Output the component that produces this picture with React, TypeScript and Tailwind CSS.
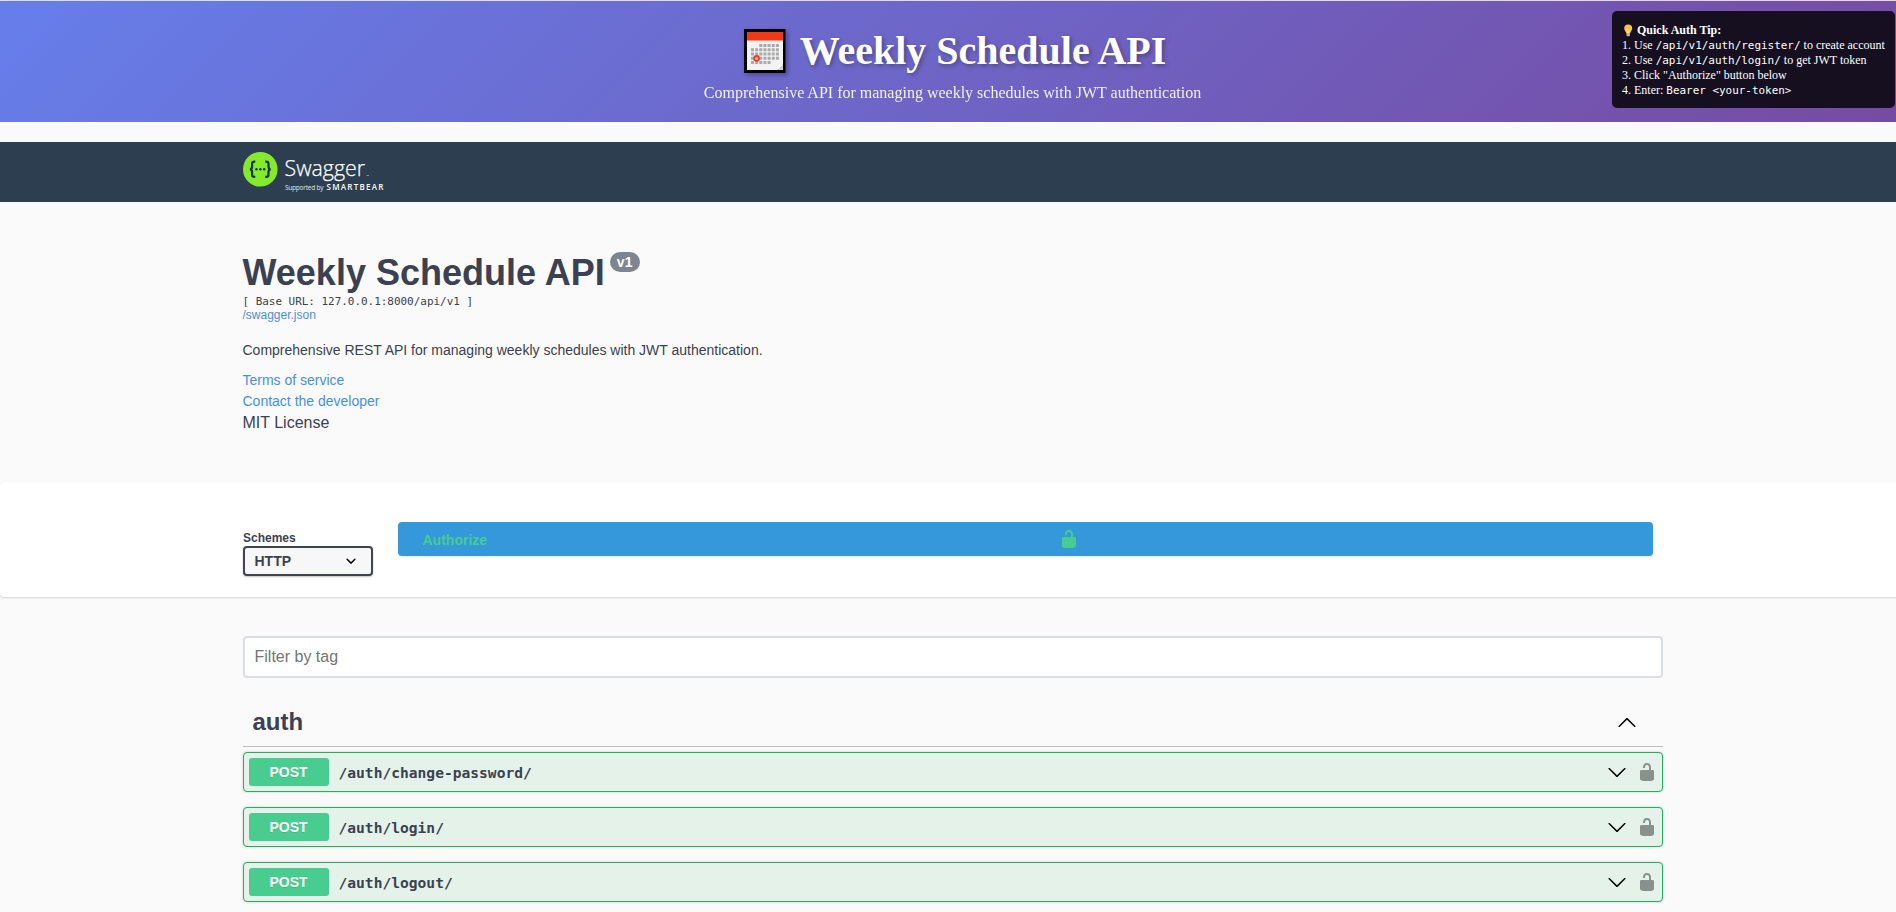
import React from "react";

const MONO = "font-['DejaVu_Sans_Mono',monospace]";

function CalendarIcon() {
  const dots: React.ReactNode[] = [];
  for (let r = 0; r < 5; r++) {
    for (let c = 0; c < 7; c++) {
      if (r === 0 && c < 2) continue;
      if (r === 4 && c > 4) continue;
      dots.push(<rect key={`${r}-${c}`} x={7 + c * 4.15} y={15 + r * 4.25} width="3" height="3" fill="#aaaaaa" />);
    }
  }
  return (
    <svg width="42" height="44" viewBox="0 0 42 44" className="shrink-0 drop-shadow-[2px_2px_2px_rgba(0,0,0,0.3)]">
      <rect width="41.5" height="44" fill="#000" />
      <rect x="3" y="3" width="36" height="38" fill="#f2f2f2" />
      <rect x="3" y="3" width="36" height="8.5" fill="#f03a17" />
      {dots}
      <circle cx="12.6" cy="29.4" r="2.5" fill="none" stroke="#f03a17" strokeWidth="1.6" />
      <path d="M39 35v6h-6z" fill="#cfcfcf" />
      <path d="M34 40V36.500l4.500-.5z" fill="#fff" />
    </svg>
  );
}

function BulbIcon() {
  return (
    <svg width="9" height="14" viewBox="0 0 9 14" className="mr-[4px] ml-[2px] shrink-0">
      <path d="M4.200 0.500a4 4 0 0 0-4 4c0 2 1.800 3 2.200 5.200h3.600c.4-2.200 2.200-3.200 2.200-5.200a4 4 0 0 0-4-4z" fill="#fdc34e" />
      <path d="M3.200 5.500l1 1 1-1v4h-2z" fill="#ffe08f" />
      <rect x="2.500" y="9.700" width="3.400" height="2.600" rx="0.800" fill="#b8b8b8" />
    </svg>
  );
}

function SwaggerLogo() {
  return (
    <svg width="145" height="44" viewBox="0 0 145 44" className="block">
      <circle cx="17.300" cy="17.300" r="17.300" fill="#85ea2d" />
      <g fill="none" stroke="#173647" strokeWidth="2.200">
        <path d="M12.300 9.700h-1c-1.500 0-2.200.8-2.200 2.200v2.600c0 1.700-.6 2.800-2.200 2.800 1.600 0 2.200 1.100 2.200 2.800v2.600c0 1.400.7 2.200 2.200 2.200h1" />
        <path d="M22.300 9.700h1c1.500 0 2.200.8 2.200 2.200v2.600c0 1.700.6 2.800 2.200 2.800-1.600 0-2.200 1.100-2.200 2.800v2.600c0 1.400-.7 2.200-2.200 2.200h-1" />
      </g>
      <g fill="#173647">
        <circle cx="13.400" cy="17.300" r="1.250" />
        <circle cx="17.300" cy="17.300" r="1.250" />
        <circle cx="21.200" cy="17.300" r="1.250" />
      </g>
      <text x="41.500" y="24" textLength="80.500" lengthAdjust="spacingAndGlyphs" fill="#fff" stroke="#fff" strokeWidth="0.25" className="font-['Open_Sans',sans-serif] text-[22.500px] font-light">Swagger</text>
      <rect x="123.500" y="23.200" width="2.500" height="0.800" fill="#9aa5af" />
      <text x="42" y="38" textLength="38.500" fill="#e3e6e9" className="font-['Open_Sans',sans-serif] text-[6.500px]">Supported by</text>
      <text x="83.500" y="38.200" textLength="56.800" fill="#fff" className="font-['Open_Sans',sans-serif] text-[8px] font-semibold">SMARTBEAR</text>
    </svg>
  );
}

function Unlocked({ className }: { className: string }) {
  return (
    <svg width="20" height="20" viewBox="0 0 20 20" className={className} fill="currentColor">
      <path d="M15.8 8H14V5.600C14 2.703 12.665 1 10 1 7.334 1 6 2.703 6 5.600V6h2v-.801C8 3.754 8.797 3 10 3c1.203 0 2 .754 2 2.199V8H4c-.553 0-1 .646-1 1.199V17c0 .549.428 1.139.951 1.307l1.197.387C5.672 18.861 6.550 19 7.100 19h5.800c.549 0 1.428-.139 1.951-.307l1.196-.387c.524-.167.953-.757.953-1.306V9.199C17 8.646 16.352 8 15.800 8z" />
    </svg>
  );
}

function Arrow({ up = false }: { up?: boolean }) {
  return (
    <svg width="20" height="20" viewBox="0 0 20 20" className="shrink-0">
      <path
        d={
          up
            ? "M17.418 14.908c.272.268.709.268.979 0s.271-.701 0-.969l-7.908-7.830c-.27-.268-.707-.268-.979 0l-7.908 7.830c-.27.268-.27.701 0 .969.271.268.709.268.979 0L10 7.767z"
            : "M17.418 6.109c.272-.268.709-.268.979 0s.271.701 0 .969l-7.908 7.830c-.27.268-.707.268-.979 0l-7.908-7.830c-.27-.268-.27-.701 0-.969.271-.268.709-.268.979 0L10 13.250z"
        }
      />
    </svg>
  );
}

function Operation({ path }: { path: string }) {
  return (
    <div className="mb-[15px] flex h-10 items-center rounded border border-[#27ae60] bg-[#e5f2e9] pr-[5px] pl-[5px] shadow-[0_0_3px_rgba(0,0,0,0.19)]">
      <div className="h-7 w-20 rounded-[3px] bg-[#49cc90] text-center text-[14px] leading-7 font-bold text-white [text-shadow:0_1px_0_rgba(0,0,0,0.1)]">
        POST
      </div>
      <div className={`${MONO} flex-1 pt-[2px] pl-[10px] text-[14.600px] font-bold text-[#3b4151]`}>{path}</div>
      <Arrow />
      <Unlocked className="ml-[10px] text-[#89918c]" />
    </div>
  );
}

export default function App() {
  return (
    <div className="h-[912px] overflow-hidden bg-[#fafafa] font-['Liberation_Sans',Arial,sans-serif] text-[#3b4151]">
      <div className="w-[1905px]">
        <header className="relative h-[122px] border-t border-[#e6dad6] bg-[linear-gradient(135deg,#667eea_0%,#764ba2_100%)] bg-origin-border font-['Liberation_Serif',serif] text-white">
          <div className="flex h-full flex-col items-center">
            <h1 className="mt-[27px] ml-[5px] flex h-[46px] items-center text-[40px] leading-[46px] font-bold [text-shadow:2px_2px_4px_rgba(0,0,0,0.3)]">
              <CalendarIcon />
              <span className="ml-[14px]">Weekly Schedule API</span>
            </h1>
            <p className="mt-[10px] text-[16px] leading-[18px] opacity-90">
              Comprehensive API for managing weekly schedules with JWT authentication
            </p>
          </div>
          <aside className="absolute top-[10px] left-[1612px] h-[97px] w-[283px] rounded-[5px] bg-[#160f20] pt-[12px] pl-[10px] text-[12px] leading-[15px] whitespace-nowrap">
            <div className="flex items-center font-bold">
              <BulbIcon />
              Quick Auth Tip:
            </div>
            <div>1. Use <span className={`${MONO} text-[10.950px]`}>/api/v1/auth/register/</span> to create account</div>
            <div>2. Use <span className={`${MONO} text-[10.950px]`}>/api/v1/auth/login/</span> to get JWT token</div>
            <div>3. Click "Authorize" button below</div>
            <div>4. Enter: <span className={`${MONO} text-[10.950px]`}>Bearer &lt;your-token&gt;</span></div>
          </aside>
        </header>

        <div className="mt-5 h-[60px] bg-[#2c3e50] pt-[10px]">
          <div className="mx-auto w-[1420px]">
            <SwaggerLogo />
          </div>
        </div>

        <section className="mx-auto h-[280px] w-[1420px] pt-[50px]">
          <h2 className="flex items-start text-[36px] leading-[41px] font-bold">
            Weekly Schedule API
            <span className="mt-0 ml-[5px] h-5 w-[30px] rounded-full bg-[#7d8492] text-center text-[14px] leading-5 text-white">v1</span>
          </h2>
          <pre className={`${MONO} mt-[1px] text-[10.950px] leading-[15px]`}>[ Base URL: 127.0.0.1:8000/api/v1 ]</pre>
          <a className="-mt-px block text-[12px] leading-[14px] text-[#4990e2]">/swagger.json</a>
          <p className="mt-[19px] text-[14px] leading-[18px]">
            Comprehensive REST API for managing weekly schedules with JWT authentication.
          </p>
          <div className="mt-[11px] text-[14px] leading-[21px] text-[#4990e2]">
            <div>Terms of service</div>
            <div>Contact the developer</div>
          </div>
          <div className="text-[16px] leading-[22px]">MIT License</div>
        </section>

        <section className="h-[115px] rounded bg-white shadow-[0_1px_2px_rgba(0,0,0,0.15)]">
          <div className="mx-auto flex w-[1420px]">
            <label className="mt-[49px] flex w-[130px] flex-col text-[12px] leading-[15px] font-bold">
              <span className="pl-[0.5px]">Schemes</span>
              <span className="flex h-[30px] items-center justify-between rounded border-2 border-[#41444e] bg-[#f7f7f7] pr-[10px] pl-[10px] text-[14px] shadow-[0_1px_2px_rgba(0,0,0,0.25)]">
                HTTP
                <svg width="20" height="20" viewBox="0 0 20 20">
                  <path d="M13.418 7.859a.695.695 0 0 1 .978 0 .68.68 0 0 1 0 .969l-3.908 3.830a.697.697 0 0 1-.979 0l-3.908-3.830a.68.68 0 0 1 0-.969.695.695 0 0 1 .978 0L10 11z" />
                </svg>
              </span>
            </label>
            <button className="mt-10 ml-[25px] flex h-[34px] w-[1255px] rounded bg-[#3498db] pl-[25px] text-left text-[14px] leading-[36px] font-bold text-[#49cc90] shadow-[0_1px_2px_rgba(0,0,0,0.1)]">
              <span className="w-[636px]">Authorize</span>
              <Unlocked className="mt-[7px]" />
            </button>
          </div>
        </section>

        <main className="mx-auto w-[1420px] pt-[39px]">
          <input
            className="block h-[42px] w-full rounded border-2 border-[#d8dde7] bg-white px-[10px] text-[16px] placeholder:text-[#757575]"
            placeholder="Filter by tag"
          />
          <div className="mt-[18px] mb-[5px] flex h-[51px] items-center border-b border-[#bdbec2] pt-[2px] pr-[26px] pl-[10px]">
            <h3 className="flex-1 text-[24px] leading-[28px] font-bold">auth</h3>
            <Arrow up />
          </div>
          <Operation path="/auth/change-password/" />
          <Operation path="/auth/login/" />
          <Operation path="/auth/logout/" />
        </main>
      </div>
    </div>
  );
}
